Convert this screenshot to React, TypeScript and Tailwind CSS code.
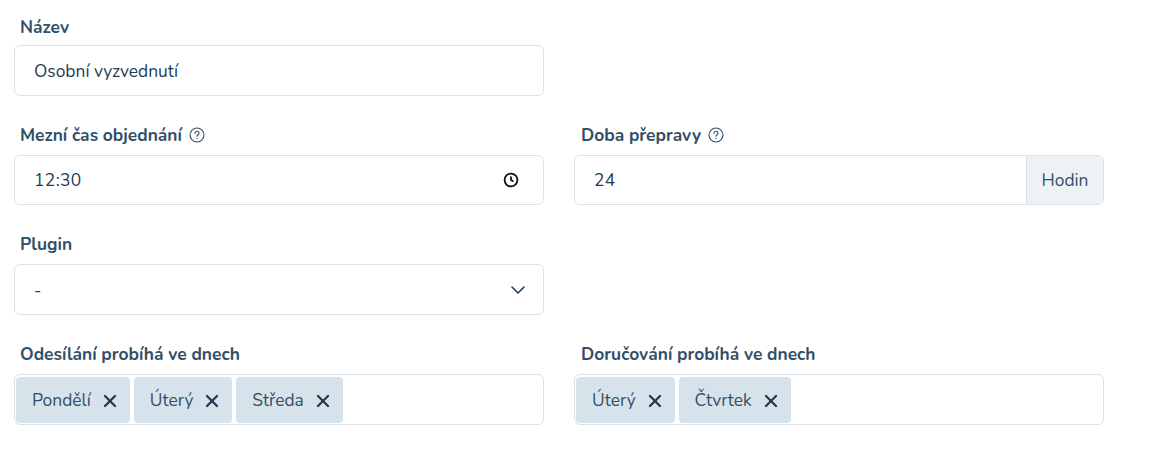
import { ChevronDown, X } from "lucide-react";

const inputBox = "h-[50.6px] rounded-md border border-[#d9e2ec] bg-white flex items-center px-[19px] pt-px text-[17.4px] text-[#243b53]";
const labelText = "h-[20px] flex items-center gap-[7px] px-[6px] text-[17.4px] font-bold leading-5 text-[#334e68]";

function HelpIcon() {
  return (
    <svg width="16" height="16" viewBox="0 0 16 16" fill="none" stroke="#334e68" strokeWidth="1.1">
      <circle cx="8" cy="8" r="7" />
      <path d="M6 6.3a2 2 0 0 1 4 0c0 1.3-2 1.6-2 3" strokeLinecap="round" />
      <circle cx="8" cy="11.4" r="0.7" fill="#334e68" stroke="none" />
    </svg>
  );
}

function ClockIcon() {
  return (
    <svg width="16" height="16" viewBox="0 0 16 16" fill="none" stroke="#111" strokeWidth="1.8">
      <circle cx="8" cy="8" r="6.4" />
      <path d="M8 4.5V8l2.4 1.5" />
    </svg>
  );
}

function Tags({ items }: { items: string[] }) {
  return (
    <div className="h-[51px] rounded-md border border-[#d9e2ec] bg-white flex items-start gap-1 px-px pt-[2px]">
      {items.map((item) => (
        <div key={item} className="h-[46px] rounded-[4px] bg-[#d7e3eb] flex items-center gap-[9px] pl-4 pr-[10px] text-[17.4px] text-[#334e68]">
          <span>{item}</span>
          <X size={20} strokeWidth={2.8} className="mt-[3px] text-[#243b53]" />
        </div>
      ))}
    </div>
  );
}

export default function App() {
  return (
    <div className="h-[453px] bg-white pl-[14px] pt-[17px] font-['Nunito','Open_Sans',sans-serif]">
      <div className="w-[1090px] grid grid-cols-2 gap-x-[30px]">
        <div className="flex flex-col gap-2">
          <div className={labelText}>Název</div>
          <div className={inputBox}>Osobní vyzvednutí</div>
        </div>
        <div />
        <div className="flex flex-col gap-[10px] mt-[29px]">
          <div className={labelText}>Mezní čas objednání <HelpIcon /></div>
          <div className={`${inputBox} justify-between`}>
            <span className="tracking-[0.4px]">12:30</span>
            <span className="mr-[5px]"><ClockIcon /></span>
          </div>
        </div>
        <div className="flex flex-col gap-[10px] mt-[29px]">
          <div className={`${labelText} pl-[7px]`}>Doba přepravy <HelpIcon /></div>
          <div className="h-[50.6px] rounded-md border border-[#d9e2ec] bg-white flex items-stretch pt-px text-[17.4px] text-[#243b53]">
            <div className="flex-1 flex items-center px-[19px] tracking-[0.4px]">24</div>
            <div className="w-[77px] -mt-px border-l border-[#d9e2ec] bg-[#eef2f7] rounded-r-md flex items-center justify-center text-[#334e68]">Hodin</div>
          </div>
        </div>
        <div className="flex flex-col gap-[10px] mt-[29px]">
          <div className={labelText}>Plugin</div>
          <div className={`${inputBox} justify-between`}>
            <span>-</span>
            <ChevronDown size={24} strokeWidth={1.6} className="text-[#243b53] -mr-[6px]" />
          </div>
        </div>
        <div />
        <div className="flex flex-col gap-[10px] mt-[29px]">
          <div className={labelText}>Odesílání probíhá ve dnech</div>
          <Tags items={["Pondělí", "Úterý", "Středa"]} />
        </div>
        <div className="flex flex-col gap-[10px] mt-[29px]">
          <div className={`${labelText} pl-[7px]`}>Doručování probíhá ve dnech</div>
          <Tags items={["Úterý", "Čtvrtek"]} />
        </div>
      </div>
    </div>
  );
}
